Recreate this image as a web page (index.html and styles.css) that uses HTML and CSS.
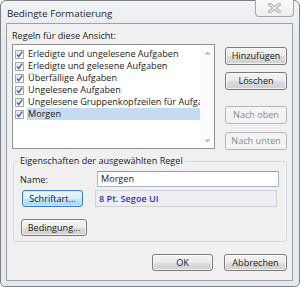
FILE: index.html
```html
<!DOCTYPE html>
<html lang="de">
<head>
<meta charset="utf-8">
<link rel="stylesheet" href="styles.css">
</head>
<body>
<div class="window">
  <div class="titlebar">
    <span class="title">Bedingte Formatierung</span>
    <div class="close">
      <svg width="13" height="10" viewBox="0 0 13 10">
        <path d="M2 1.5 L11 8.5 M11 1.5 L2 8.5" stroke="#9a9da2" stroke-width="3.2" stroke-linecap="square" fill="none"/>
        <path d="M2 1.5 L11 8.5 M11 1.5 L2 8.5" stroke="#ffffff" stroke-width="1.4" stroke-linecap="square" fill="none"/>
      </svg>
    </div>
  </div>
  <div class="client">
    <div class="label">Regeln für diese Ansicht:</div>
    <div class="rules">
      <div class="listbox">
        <ul class="items">
          <li class="item"><span class="cb"><svg width="9" height="9" viewBox="0 0 9 9"><path d="M2 4.3 L3.7 6.6 L7.2 1.6" stroke="#3a5ca6" stroke-width="1.3" fill="none"/></svg></span><span class="txt">Erledigte und ungelesene Aufgaben</span></li>
          <li class="item"><span class="cb"><svg width="9" height="9" viewBox="0 0 9 9"><path d="M2 4.3 L3.7 6.6 L7.2 1.6" stroke="#3a5ca6" stroke-width="1.3" fill="none"/></svg></span><span class="txt">Erledigte und gelesene Aufgaben</span></li>
          <li class="item"><span class="cb"><svg width="9" height="9" viewBox="0 0 9 9"><path d="M2 4.3 L3.7 6.6 L7.2 1.6" stroke="#3a5ca6" stroke-width="1.3" fill="none"/></svg></span><span class="txt">Überfällige Aufgaben</span></li>
          <li class="item"><span class="cb"><svg width="9" height="9" viewBox="0 0 9 9"><path d="M2 4.3 L3.7 6.6 L7.2 1.6" stroke="#3a5ca6" stroke-width="1.3" fill="none"/></svg></span><span class="txt">Ungelesene Aufgaben</span></li>
          <li class="item"><span class="cb"><svg width="9" height="9" viewBox="0 0 9 9"><path d="M2 4.3 L3.7 6.6 L7.2 1.6" stroke="#3a5ca6" stroke-width="1.3" fill="none"/></svg></span><span class="txt">Ungelesene Gruppenkopfzeilen für Aufgaben</span></li>
          <li class="item selected"><span class="cb"><svg width="9" height="9" viewBox="0 0 9 9"><path d="M2 4.3 L3.7 6.6 L7.2 1.6" stroke="#3a5ca6" stroke-width="1.3" fill="none"/></svg></span><span class="txt">Morgen</span></li>
        </ul>
        <div class="scrollbar">
          <svg width="7" height="4" viewBox="0 0 7 4"><path d="M0.5 3.5 L3.5 0.5 L6.5 3.5 Z" fill="#b4b4b4"/></svg>
          <svg width="7" height="4" viewBox="0 0 7 4"><path d="M0.5 0.5 L3.5 3.5 L6.5 0.5 Z" fill="#b4b4b4"/></svg>
        </div>
      </div>
      <div class="side">
        <button class="btn add">Hinzufügen</button>
        <button class="btn del">Löschen</button>
        <button class="btn disabled up">Nach oben</button>
        <button class="btn disabled down">Nach unten</button>
      </div>
    </div>
    <fieldset class="group">
      <legend class="legend">Eigenschaften der ausgewählten Regel</legend>
      <div class="group-body">
        <div class="row name-row">
          <span class="field-label">Name:</span>
          <div class="input">Morgen</div>
        </div>
        <div class="row font-row">
          <button class="btn focus font-btn">Schriftart...</button>
          <div class="font-box">8 Pt. Segoe UI</div>
        </div>
        <button class="btn cond-btn">Bedingung...</button>
      </div>
    </fieldset>
    <div class="footer">
      <button class="btn ok">OK</button>
      <button class="btn cancel">Abbrechen</button>
    </div>
  </div>
</div>
</body>
</html>
```

FILE: styles.css
```css
* { box-sizing: border-box; }
html, body { margin: 0; padding: 0; background: #ffffff; }
body {
  width: 300px;
  height: 287px;
  overflow: hidden;
  font-family: "Open Sans", "Liberation Sans", sans-serif;
  font-size: 9.1px;
  color: #1a1a1a;
}
.window {
  width: 300px;
  height: 287px;
  border: 1px solid #7d8085;
  border-radius: 6px 6px 5px 5px;
  background: linear-gradient(#f1f3f5, #e6e9ec 40px, #e6e9ec);
  padding: 0 6px 5px 5px;
  display: flex;
  flex-direction: column;
}
.titlebar {
  height: 22px;
  display: flex;
  align-items: flex-start;
  justify-content: space-between;
}
.title {
  font-size: 9.8px;
  color: #1e1e1e;
  margin-left: 1px;
  margin-top: 6px;
  line-height: 14px;
}
.close {
  width: 39px;
  height: 17px;
  margin-top: -1px;
  margin-right: -1px;
  border: 1px solid #a3a6ab;
  border-top: none;
  border-radius: 0 0 4px 4px;
  background: linear-gradient(#fbfbfc, #eceef0);
  display: flex;
  align-items: center;
  justify-content: center;
}
.client {
  flex: 1;
  border: 1px solid #9aa1a8;
  background: #f0f0f0;
  padding: 6px 5px 0 5px;
  display: flex;
  flex-direction: column;
}
.label {
  line-height: 12px;
  height: 12px;
  margin-bottom: 2px;
}
.rules {
  display: flex;
  align-items: flex-start;
}
.listbox {
  width: 203px;
  height: 105px;
  border: 1px solid #8e9196;
  background: #ffffff;
  display: flex;
}
.items {
  list-style: none;
  margin: 0;
  padding: 3px 0 0 0;
  flex: 1;
  overflow: hidden;
}
.item {
  height: 12px;
  display: flex;
  align-items: center;
  white-space: nowrap;
}
.cb {
  width: 9px;
  height: 9px;
  margin-left: 2px;
  margin-right: 3px;
  border: 1px solid #a3a8ad;
  background: linear-gradient(135deg, #e2e6ea, #fbfbfc);
  display: flex;
  align-items: center;
  justify-content: center;
  flex: none;
}
.cb svg { display: block; margin: -1px; }
.txt {
  line-height: 12px;
  padding-left: 1px;
  flex: 1;
  overflow: hidden;
}
.selected .txt { background: #c4dcf3; }
.scrollbar {
  width: 14px;
  flex: none;
  background: #fbfbfb;
  display: flex;
  flex-direction: column;
  justify-content: space-between;
  align-items: center;
  padding: 6px 0 5px 0;
}
.scrollbar svg { display: block; }
.side {
  margin-left: 10px;
  display: flex;
  flex-direction: column;
  padding-top: 3px;
}
.btn {
  font-family: inherit;
  font-size: 9.1px;
  color: #1a1a1a;
  height: 18px;
  width: 62px;
  padding: 0;
  border: 1px solid #7a7a7a;
  border-radius: 3px;
  background: linear-gradient(#f3f3f3, #ebebeb 50%, #dddddd 51%, #cfcfcf);
  box-shadow: inset 0 0 0 1px rgba(255,255,255,0.7);
  line-height: 14px;
  text-align: center;
  white-space: nowrap;
}
.del { margin-top: 7px; }
.up { margin-top: 16px; }
.down { margin-top: 8px; }
.disabled {
  color: #8a8a8a;
  border-color: #b3b7ba;
  background: #f4f4f4;
  box-shadow: none;
}
.group {
  margin: 5px 0 0 1px;
  padding: 0;
  border: 1px solid #d3dbe1;
  border-radius: 3px;
  min-width: 0;
}
.legend {
  margin-left: 4px;
  padding: 0 2px;
  line-height: 12px;
}
.group-body {
  padding: 4px 7px 5px 6px;
  display: flex;
  flex-direction: column;
  align-items: flex-start;
}
.row {
  display: flex;
  align-items: center;
  width: 100%;
}
.field-label {
  width: 77px;
  flex: none;
}
.input {
  width: 182px;
  height: 16px;
  border: 1px solid #a9b6c6;
  border-top-color: #8f9cad;
  background: #ffffff;
  padding-left: 3px;
  line-height: 14px;
}
.font-row {
  margin-top: 3px;
}
.font-btn {
  margin-left: 2px;
  width: 61px;
  height: 17px;
  line-height: 13px;
}
.focus {
  border-color: #3c7fb1;
  background: linear-gradient(#eaf6fd, #d9f0fc 50%, #bee6fd 51%, #a7d9f5);
  box-shadow: inset 0 0 0 1px #cbe9fa;
}
.font-box {
  margin-left: 12px;
  width: 182px;
  height: 17px;
  border: 1px solid #cfd3d8;
  background: #eeeef2;
  color: #3232c8;
  font-weight: 600;
  padding-left: 3px;
  line-height: 15px;
}
.cond-btn {
  margin-top: 12px;
  margin-left: 1px;
  width: 66px;
  height: 17px;
  line-height: 13px;
}
.footer {
  display: flex;
  justify-content: flex-end;
  margin-top: 12px;
  gap: 11px;
}
.ok { width: 61px; height: 17px; line-height: 13px; }
.cancel { width: 63px; height: 17px; line-height: 13px; }
```
